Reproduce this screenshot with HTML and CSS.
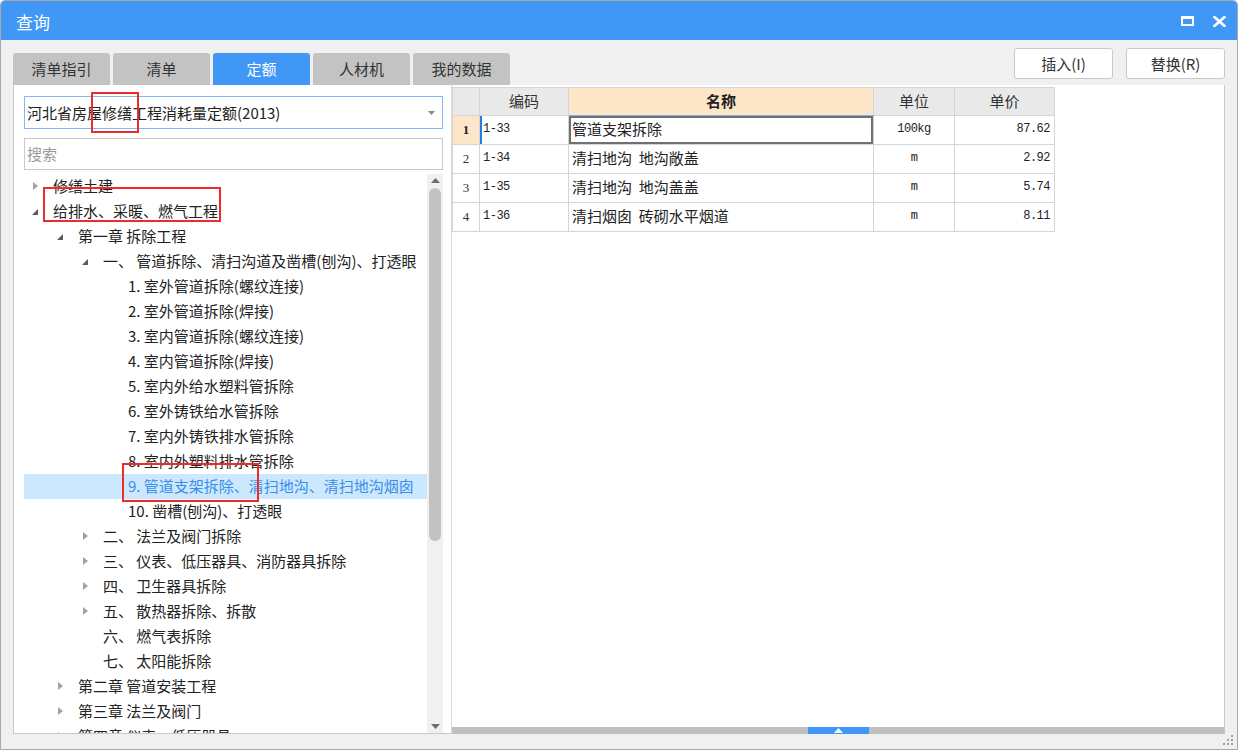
FILE: index.html
```html
<!DOCTYPE html>
<html lang="zh">
<head>
<meta charset="utf-8">
<title>查询</title>
<link rel="stylesheet" href="styles.css">
</head>
<body>
<div class="window">
  <div class="titlebar">
    <span class="title">查询</span>
    <div class="win-ctrls">
      <svg width="13" height="10" viewBox="0 0 13 10"><rect x="1" y="1.5" width="11" height="7.5" fill="none" stroke="#fff" stroke-width="2"/><rect x="0" y="0" width="13" height="3" fill="#fff"/></svg>
      <svg width="13" height="11" viewBox="0 0 13 11"><path d="M1.5 1 L11.5 10 M11.5 1 L1.5 10" stroke="#fff" stroke-width="2.6" stroke-linecap="square"/></svg>
    </div>
  </div>

  <div class="topbar">
    <div class="tabs">
      <div class="tab">清单指引</div>
      <div class="tab">清单</div>
      <div class="tab active">定额</div>
      <div class="tab">人材机</div>
      <div class="tab">我的数据</div>
    </div>
    <div class="actions">
      <button class="btn">插入(I)</button>
      <button class="btn">替换(R)</button>
    </div>
  </div>

  <div class="main">
    <div class="left">
      <div class="combo">
        <span class="combo-text">河北省房屋修缮工程消耗量定额(2013)</span>
        <svg class="combo-arrow" width="7" height="4" viewBox="0 0 7 4"><polygon points="0,0 7,0 3.5,4" fill="#8a8a8a"/></svg>
      </div>
      <div class="search"><span class="placeholder">搜索</span></div>
      <div class="tree">
        <div class="tree-list">
          <div class="row l0"><span class="tw c"></span><span class="lbl">修缮土建</span></div>
          <div class="row l0"><span class="tw e"></span><span class="lbl">给排水、采暖、燃气工程</span></div>
          <div class="row l1"><span class="tw e"></span><span class="lbl">第一章 拆除工程</span></div>
          <div class="row l2"><span class="tw e"></span><span class="lbl">一、 管道拆除、清扫沟道及凿槽(刨沟)、打透眼</span></div>
          <div class="row l3"><span class="tw"></span><span class="lbl">1. 室外管道拆除(螺纹连接)</span></div>
          <div class="row l3"><span class="tw"></span><span class="lbl">2. 室外管道拆除(焊接)</span></div>
          <div class="row l3"><span class="tw"></span><span class="lbl">3. 室内管道拆除(螺纹连接)</span></div>
          <div class="row l3"><span class="tw"></span><span class="lbl">4. 室内管道拆除(焊接)</span></div>
          <div class="row l3"><span class="tw"></span><span class="lbl">5. 室内外给水塑料管拆除</span></div>
          <div class="row l3"><span class="tw"></span><span class="lbl">6. 室外铸铁给水管拆除</span></div>
          <div class="row l3"><span class="tw"></span><span class="lbl">7. 室内外铸铁排水管拆除</span></div>
          <div class="row l3"><span class="tw"></span><span class="lbl">8. 室内外塑料排水管拆除</span></div>
          <div class="row l3 selected"><span class="tw"></span><span class="lbl">9. 管道支架拆除、清扫地沟、清扫地沟烟囱</span></div>
          <div class="row l3"><span class="tw"></span><span class="lbl">10. 凿槽(刨沟)、打透眼</span></div>
          <div class="row l2"><span class="tw c"></span><span class="lbl">二、 法兰及阀门拆除</span></div>
          <div class="row l2"><span class="tw c"></span><span class="lbl">三、 仪表、低压器具、消防器具拆除</span></div>
          <div class="row l2"><span class="tw c"></span><span class="lbl">四、 卫生器具拆除</span></div>
          <div class="row l2"><span class="tw c"></span><span class="lbl">五、 散热器拆除、拆散</span></div>
          <div class="row l2"><span class="tw"></span><span class="lbl">六、 燃气表拆除</span></div>
          <div class="row l2"><span class="tw"></span><span class="lbl">七、 太阳能拆除</span></div>
          <div class="row l1"><span class="tw c"></span><span class="lbl">第二章 管道安装工程</span></div>
          <div class="row l1"><span class="tw c"></span><span class="lbl">第三章 法兰及阀门</span></div>
          <div class="row l1"><span class="tw c"></span><span class="lbl">第四章 仪表、低压器具</span></div>
        </div>
        <div class="vscroll">
          <svg class="sb-arrow" width="9" height="5" viewBox="0 0 9 5"><polygon points="0,5 9,5 4.5,0" fill="#6e6e6e"/></svg>
          <div class="sb-thumb"></div>
          <div class="sb-fill"></div>
          <svg class="sb-arrow" width="9" height="5" viewBox="0 0 9 5"><polygon points="0,0 9,0 4.5,5" fill="#6e6e6e"/></svg>
        </div>
      </div>
    </div>

    <div class="right">
      <div class="grid-area">
        <table class="grid">
          <colgroup>
            <col class="c-idx"><col class="c-code"><col class="c-name"><col class="c-unit"><col class="c-price">
          </colgroup>
          <thead>
            <tr>
              <th class="idx"></th>
              <th>编码</th>
              <th class="sel-col">名称</th>
              <th>单位</th>
              <th>单价</th>
            </tr>
          </thead>
          <tbody>
            <tr class="cur">
              <td class="idx">1</td>
              <td class="code cur-code">1-33</td>
              <td class="name cur-name">管道支架拆除</td>
              <td class="unit">100kg</td>
              <td class="price">87.62</td>
            </tr>
            <tr>
              <td class="idx">2</td>
              <td class="code">1-34</td>
              <td class="name">清扫地沟&nbsp; 地沟敞盖</td>
              <td class="unit">m</td>
              <td class="price">2.92</td>
            </tr>
            <tr>
              <td class="idx">3</td>
              <td class="code">1-35</td>
              <td class="name">清扫地沟&nbsp; 地沟盖盖</td>
              <td class="unit">m</td>
              <td class="price">5.74</td>
            </tr>
            <tr>
              <td class="idx">4</td>
              <td class="code">1-36</td>
              <td class="name">清扫烟囱&nbsp; 砖砌水平烟道</td>
              <td class="unit">m</td>
              <td class="price">8.11</td>
            </tr>
          </tbody>
        </table>
      </div>
      <div class="hsplit">
        <div class="handle"><svg width="9" height="5" viewBox="0 0 9 5"><polygon points="0,5 9,5 4.5,0" fill="#fff"/></svg></div>
      </div>
    </div>
  </div>

  <div class="footer">
    <svg class="grip" width="11" height="11" viewBox="0 0 11 11" fill="#a0a0a0">
      <rect x="8" y="0" width="2" height="2"/>
      <rect x="4" y="4" width="2" height="2"/><rect x="8" y="4" width="2" height="2"/>
      <rect x="0" y="8" width="2" height="2"/><rect x="4" y="8" width="2" height="2"/><rect x="8" y="8" width="2" height="2"/>
    </svg>
  </div>

  <div class="mark mark1"></div>
  <div class="mark mark2"></div>
  <div class="mark mark3"></div>
</div>
</body>
</html>
```

FILE: styles.css
```css
* { box-sizing: border-box; }
html, body { margin: 0; padding: 0; }
body {
  width: 1238px;
  height: 750px;
  overflow: hidden;
  background: #fff;
  font-family: "Noto Sans CJK SC", "Microsoft YaHei", sans-serif;
  font-size: 15px;
  color: #222;
}
.window {
  position: relative;
  width: 1238px;
  height: 750px;
  border: 1px solid #a9a9a9;
  border-radius: 5px 5px 0 0;
  overflow: hidden;
  background: #f0f0f0;
  display: flex;
  flex-direction: column;
}

/* title bar */
.titlebar {
  flex: none;
  height: 39px;
  background: #4097f6;
  display: flex;
  align-items: center;
  justify-content: space-between;
  padding: 0 11px 0 15px;
}
.title { color: #fff; font-size: 17px; line-height: 20px; margin-top: 2px; }
.win-ctrls { display: flex; align-items: center; gap: 19px; margin-top: 1px; }

/* tabs + buttons */
.topbar {
  flex: none;
  height: 45px;
  display: flex;
  justify-content: space-between;
  padding: 0 12px;
}
.tabs { display: flex; gap: 3px; align-self: flex-end; }
.tab {
  width: 97px;
  height: 32px;
  background: #c3c3c3;
  border-radius: 3px 3px 0 0;
  display: flex;
  align-items: center;
  justify-content: center;
  line-height: 20px;
  color: #333;
}
.tab.active { background: #4097f6; color: #fff; }
.actions { display: flex; gap: 13px; padding-top: 8px; }
.btn {
  width: 99px;
  height: 31px;
  background: #fff;
  border: 1px solid #c9c9c9;
  border-radius: 3px;
  font-family: inherit;
  font-size: 15px;
  color: #333;
  line-height: 20px;
  padding: 0;
}

/* main */
.main {
  flex: none;
  height: 649px;
  display: flex;
  padding: 0 12px;
}
.left {
  width: 439px;
  background: #fff;
  border-left: 1px solid #c9c9c9;
  border-bottom: 1px solid #c9c9c9;
  border-right: 1px solid #dadada;
  padding: 11px 8px 0 10px;
  display: flex;
  flex-direction: column;
}
.combo {
  flex: none;
  height: 33px;
  border: 1px solid #83b8f2;
  display: flex;
  align-items: center;
  justify-content: space-between;
  padding: 0 7px 0 2px;
  margin-bottom: 9px;
}
.combo-text { line-height: 20px; color: #222; }
.search {
  flex: none;
  height: 32px;
  border: 1px solid #c9c9c9;
  display: flex;
  align-items: center;
  padding-left: 2px;
  margin-bottom: 4px;
}
.placeholder { color: #9a9a9a; line-height: 20px; }

.tree { flex: 1; display: flex; min-height: 0; }
.tree-list { flex: 1; overflow: hidden; }
.row {
  height: 25px;
  display: flex;
  align-items: center;
  white-space: nowrap;
  line-height: 20px;
  padding-bottom: 2px;
}
.row.l0 { padding-left: 9px; }
.row.l1 { padding-left: 34px; }
.row.l2 { padding-left: 59px; }
.row.l3 { padding-left: 84px; }
.row.selected { background: #cce8ff; color: #3a8ee8; }
.tw { flex: none; width: 20px; height: 20px; position: relative; }
.tw.c::before {
  content: "";
  position: absolute;
  left: 0;
  top: 6px;
  border-left: 5px solid #a2a2a2;
  border-top: 4.5px solid transparent;
  border-bottom: 4.5px solid transparent;
}
.tw.e::before {
  content: "";
  position: absolute;
  left: -1px;
  top: 8px;
  border-right: 6px solid #5a5a5a;
  border-top: 6px solid transparent;
}

.vscroll {
  flex: none;
  width: 16px;
  background: #f0f0f0;
  display: flex;
  flex-direction: column;
  align-items: center;
  padding: 4px 0 4px;
}
.sb-arrow { flex: none; margin-bottom: 5px; }
.sb-arrow:last-child { margin: 0; }
.sb-thumb {
  flex: none;
  width: 12px;
  height: 353px;
  background: #c2c2c2;
  border-radius: 6px;
}
.sb-fill { flex: 1; }

/* right grid */
.right {
  width: 773px;
  background: #fff;
  border-right: 1px solid #c9c9c9;
  display: flex;
  flex-direction: column;
}
.grid-area { flex: 1; padding-top: 2px; }
.grid {
  border-collapse: collapse;
  table-layout: fixed;
  width: 602px;
}
.c-idx { width: 27px; }
.c-code { width: 89px; }
.c-name { width: 305px; }
.c-unit { width: 81px; }
.c-price { width: 100px; }
.grid th, .grid td {
  border: 1px solid #d5d5d5;
  padding: 0 3px 2px;
  overflow: hidden;
  white-space: nowrap;
}
.grid th {
  height: 28px;
  background: #e9e9e9;
  font-weight: normal;
  color: #333;
  line-height: 20px;
  text-align: center;
}
.grid th.sel-col { background: #fde6c8; font-weight: bold; color: #222; border-bottom: 1px solid #7fb2ee; }
.grid td { height: 29px; line-height: 20px; }
.grid td.idx {
  background: #fff;
  text-align: center;
  font-family: "Liberation Serif", serif;
  font-size: 13px;
  color: #333;
  padding: 0;
}
.grid tr.cur td.idx { background: #fde6c8; font-weight: bold; color: #222; }
.grid td.code, .grid td.unit, .grid td.price {
  font-family: "Liberation Mono", monospace;
  font-size: 12px;
  letter-spacing: -0.5px;
  color: #222;
}
.grid td.unit { text-align: center; }
.grid td.price { text-align: right; padding-right: 4px; }
.grid td.name { color: #222; }
.grid td.cur-code { box-shadow: inset 2px 0 0 #1f7fe9; }
.grid td.cur-name { box-shadow: inset 0 0 0 2px #707070; }

.hsplit {
  flex: none;
  height: 7px;
  background: #bfbfbf;
  display: flex;
  justify-content: center;
}
.handle {
  width: 61px;
  height: 7px;
  background: #4097f6;
  display: flex;
  align-items: center;
  justify-content: center;
}

/* footer */
.footer {
  flex: 1;
  display: flex;
  justify-content: flex-end;
  align-items: flex-end;
  padding: 0 3px 3px 0;
}

/* red annotation boxes */
.mark {
  position: absolute;
  border: 2px solid #ee2b2b;
}
.mark1 { left: 90px; top: 91px; width: 48px; height: 41px; }
.mark2 { left: 42px; top: 186px; width: 178px; height: 35px; }
.mark3 { left: 121px; top: 462px; width: 137px; height: 39px; }
```
